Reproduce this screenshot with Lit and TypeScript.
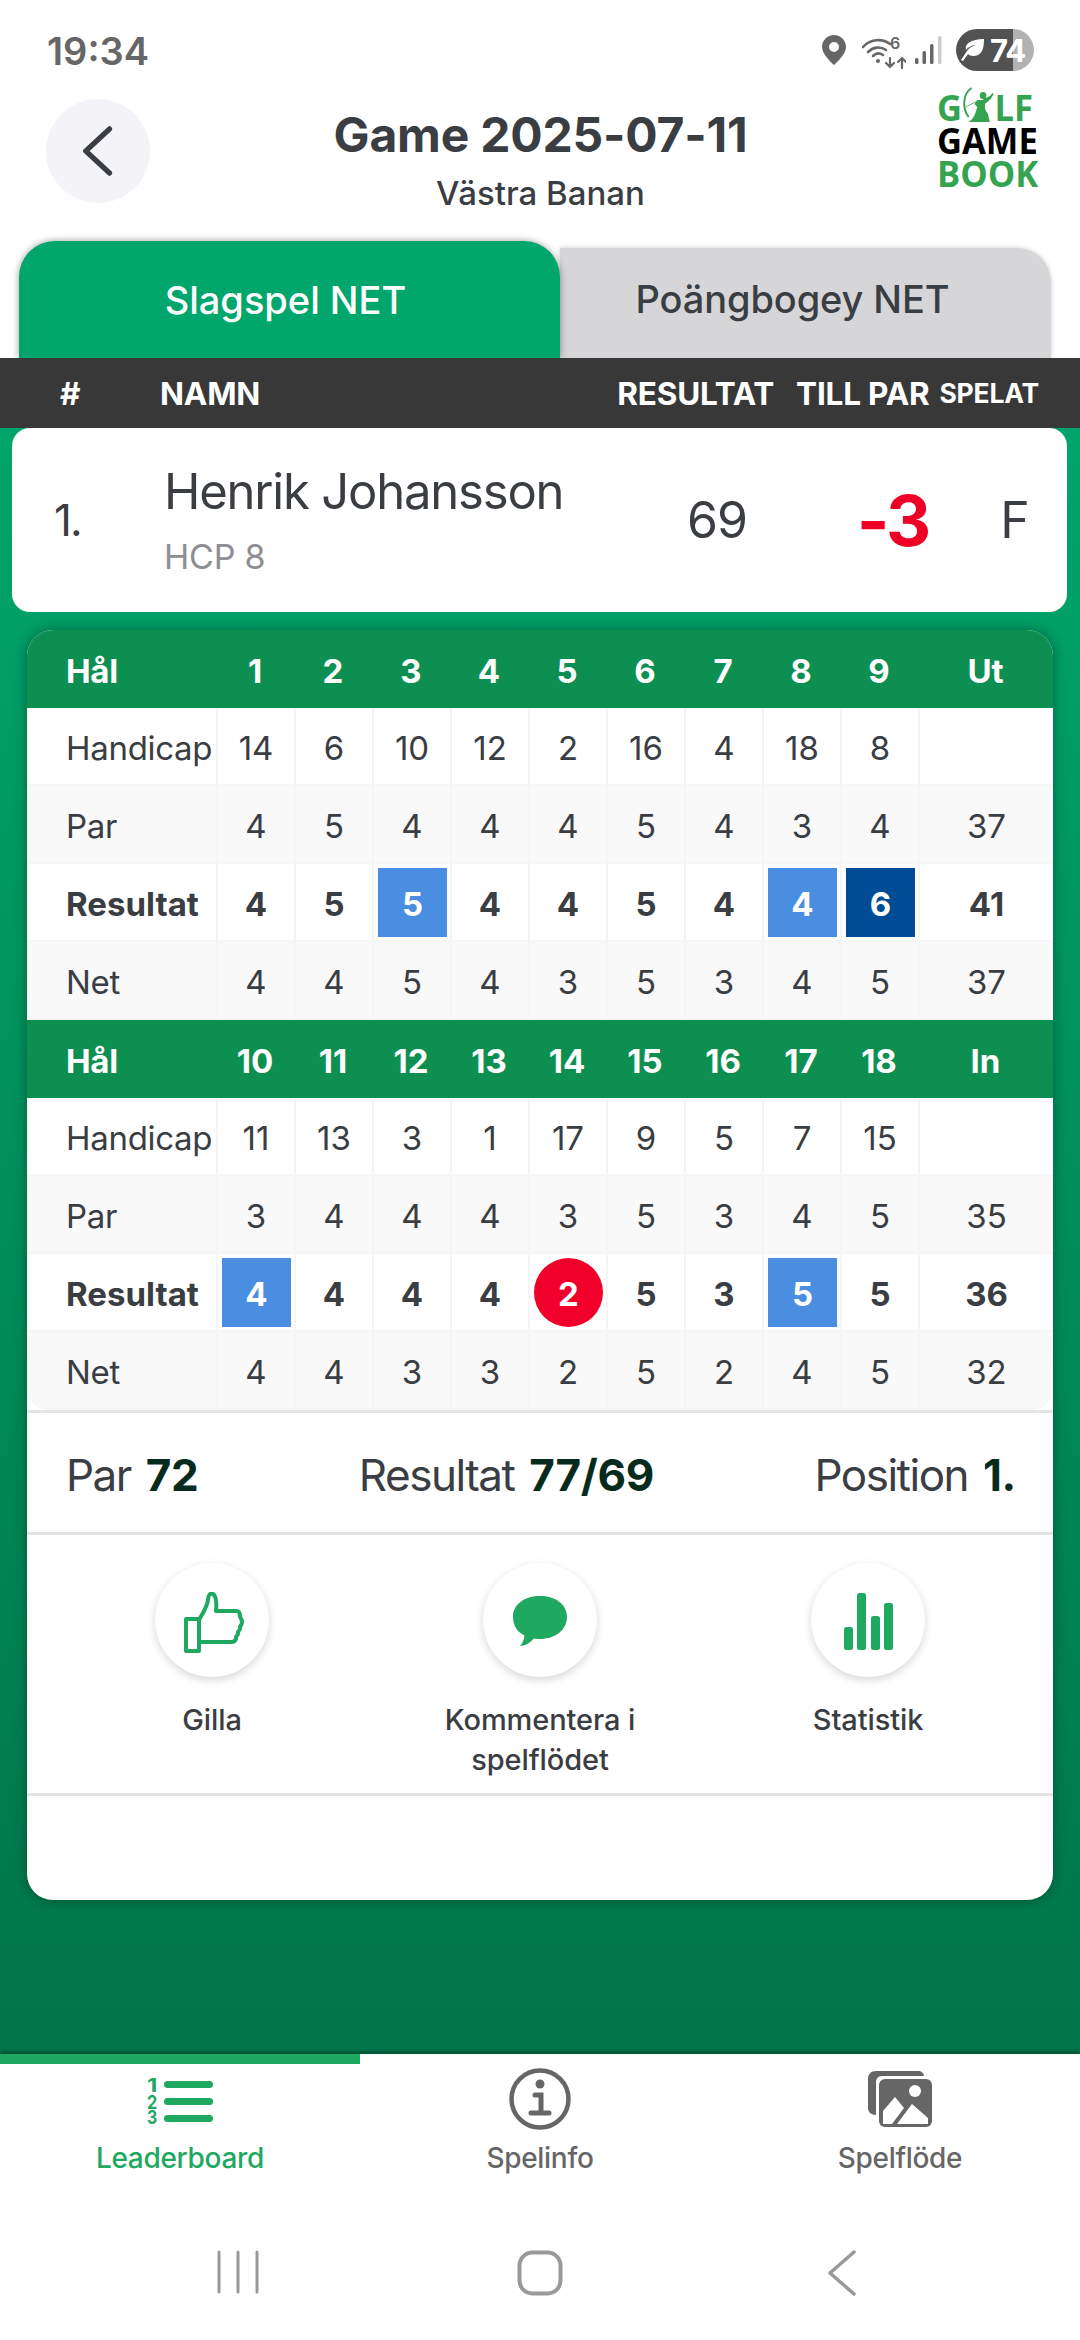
import { LitElement, html, css } from "lit";
import { customElement } from "lit/decorators.js";

type Mark = "" | "blue" | "dark" | "red";
interface Nine {
  head: string[]; label: string; hcp: string[]; par: string[]; res: string[]; net: string[]; marks: Record<number, Mark>;
}
const nines: Nine[] = [
  {
    head: ["1","2","3","4","5","6","7","8","9"], label: "Ut",
    hcp: ["14","6","10","12","2","16","4","18","8",""],
    par: ["4","5","4","4","4","5","4","3","4","37"],
    res: ["4","5","5","4","4","5","4","4","6","41"],
    net: ["4","4","5","4","3","5","3","4","5","37"],
    marks: { 2: "blue", 7: "blue", 8: "dark" },
  },
  {
    head: ["10","11","12","13","14","15","16","17","18"], label: "In",
    hcp: ["11","13","3","1","17","9","5","7","15",""],
    par: ["3","4","4","4","3","5","3","4","5","35"],
    res: ["4","4","4","4","2","5","3","5","5","36"],
    net: ["4","4","3","3","2","5","2","4","5","32"],
    marks: { 0: "blue", 4: "red", 7: "blue" },
  },
];

@customElement("app-root")
export class AppRoot extends LitElement {
  static styles = css`
    :host { display: flex; flex-direction: column; width: 1080px; height: 2340px; overflow: hidden; background: #fff;
      font-family: Inter, "Liberation Sans", sans-serif; color: #3a3d42; }
    svg { display: block; }

    .status { height: 90px; flex: none; display: flex; align-items: center; padding: 10px 46px 0 47px; box-sizing: border-box; }
    .time { font-size: 38px; font-weight: 600; color: #666; flex: 1; padding-top: 2px; }
    .status svg.pin { margin-right: 16px; }
    .status svg.wifi { margin-right: 9px; }
    .status svg.sig { margin-right: 14px; }
    .batt { width: 78px; height: 42px; border-radius: 21px; overflow: hidden; background: linear-gradient(90deg, #525252 0 57px, #b2b2b2 57px); display: flex; align-items: center; color: #fff; font-size: 31px; font-weight: 700; padding-left: 5px; box-sizing: border-box; letter-spacing: -1px; }
    .batt svg { margin-right: 6px; }

    .header { height: 151px; flex: none; display: grid; grid-template-columns: 1fr auto 1fr; padding: 0 45px 0 46px; box-sizing: border-box; }
    .back { width: 104px; height: 104px; border-radius: 50%; background: #f4f4f8; margin-top: 9px; display: flex; align-items: center; justify-content: center; padding-right: 5px; box-sizing: border-box; }
    .titles { text-align: center; margin-top: 16px; }
    .title { font-size: 48px; font-weight: 700; line-height: 58px; color: #3a3d42; letter-spacing: -0.2px; }
    .sub { font-size: 33px; font-weight: 500; line-height: 44px; margin-top: 7px; }
    .logo { justify-self: end; width: 100px; font-family: "Open Sans", sans-serif; font-weight: 700; font-size: 36px; line-height: 33px; color: #35a350; text-align: center; margin-top: 1px; transform: scaleX(.96); transform-origin: center; }
    .logo .l1 { display: flex; justify-content: space-between; align-items: center; height: 33px; }
    .logo .blk { color: #000; }

    .tabs { height: 117px; flex: none; display: flex; padding-left: 19px; align-items: flex-end; }
    .tab { display: flex; align-items: center; justify-content: center; font-size: 38px; font-weight: 500; box-sizing: border-box; }
    .tab.on { width: 541px; height: 117px; background: #00a66b; color: #fff; border-radius: 36px 36px 0 0; padding-right: 8px; box-shadow: 0 0 7px rgba(0,0,0,.4); position: relative; z-index: 1; }
    .tab.off { width: 491px; height: 110px; background: #d6d6d8; color: #3a3d42; border-radius: 0 34px 0 0; padding: 0 26px 8px 0; box-shadow: 0 0 5px rgba(0,0,0,.2); letter-spacing: -0.1px; }

    .bar { height: 70px; flex: none; background: #383838; color: #fff; display: flex; align-items: center; font-size: 31.5px; font-weight: 700; padding-left: 60px; position: relative; z-index: 2; letter-spacing: -0.2px; }
    .bar .hash { width: 100px; }
    .bar .nm { flex: 1; }
    .bar .r { margin-right: 22px; }
    .bar .t { margin-right: 10px; }
    .bar .s { font-size: 26.5px; margin-right: 41px; }

    .main { height: 1626px; flex: none; background: linear-gradient(180deg, #00a56b 0%, #00794c 92%, #007449 100%); box-sizing: border-box; }
    .player { height: 184px; margin: 0 13px 0 12px; background: #fff; border-radius: 18px; display: grid; grid-template-columns: 110px 1fr 163px 125px 112px; align-items: center; padding-left: 42px; box-sizing: border-box; }
    .rank { font-size: 44px; letter-spacing: -2px; }
    .pname { font-size: 49px; line-height: 60px; letter-spacing: -1.2px; margin-bottom: 13px; }
    .hcp { font-size: 34px; line-height: 44px; color: #8e8e93; letter-spacing: -0.2px; }
    .num { font-size: 50px; text-align: center; letter-spacing: -1px; }
    .res { margin-right: 63px; width: 100px; }
    .fin { padding-left: 7px; }
    .top { font-size: 70px; font-weight: 700; color: #ee0026; text-align: center; letter-spacing: -3px; }

    .card { margin: 18px 27px 0; height: 1270px; background: #fff; border-radius: 26px; box-shadow: 0 0 14px rgba(0,0,0,.35); overflow: hidden; display: flex; flex-direction: column; }
    .table { display: grid; grid-template-columns: 189px repeat(9, 78px) 1fr; font-size: 33px; flex: none; border-bottom: 3px solid #e4e4e6; height: 780px; grid-auto-rows: 78px; }
    .c { display: flex; align-items: center; justify-content: center; border-left: 2px solid #f5f5f6; border-bottom: 2px solid #f6f6f7; box-sizing: border-box; position: relative; padding-top: 4px; }
    .lab { justify-content: flex-start; padding-left: 39px; border-left: none; white-space: nowrap; letter-spacing: -0.3px; }
    .lab.b { letter-spacing: 0; }
    .h { background: #0e8f52; color: #fff; font-weight: 700; border: none; }
    .alt { background: #f9f9fa; }
    .b { font-weight: 700; }
    .table > .c:last-child { border-bottom-right-radius: 22px; }
    .table > .c:nth-last-child(11) { border-bottom-left-radius: 22px; }
    .mk { position: absolute; left: 4px; top: 4px; width: 69px; height: 69px; display: flex; align-items: center; justify-content: center; color: #fff; padding-top: 2px; box-sizing: border-box; }
    .mk.blue { background: #4a8ee2; }
    .mk.dark { background: #014c94; }
    .mk.red { background: #f0002b; border-radius: 50%; }

    .sum { height: 122px; flex: none; display: flex; align-items: center; justify-content: space-between; padding: 4px 37px 0 39px; font-size: 44px; border-bottom: 3px solid #e4e4e6; letter-spacing: -1.5px; box-sizing: border-box; }
    .sum b { color: #062b1c; font-weight: 700; margin-left: 4px; letter-spacing: -0.3px; }

    .acts { height: 261px; flex: none; display: grid; grid-template-columns: repeat(3, 328px); padding: 28px 0 0 21px; box-sizing: border-box; border-bottom: 3px solid #e4e4e6; }
    .act { display: flex; flex-direction: column; align-items: center; font-size: 29px; font-weight: 500; line-height: 40px; text-align: center; letter-spacing: -0.1px; }
    .circ { width: 114px; height: 114px; border-radius: 50%; background: #fff; box-shadow: 0 3px 9px rgba(0,0,0,.16); display: flex; align-items: center; justify-content: center; margin-bottom: 23px; }
    .thumb { margin: 4px 0 0 4px; }

    .nav { flex: 1; position: relative; z-index: 1; background: #fff; box-shadow: 0 -2px 4px rgba(0,0,0,.35); display: flex; flex-direction: column; }
    .ind { width: 360px; height: 10px; background: #1fa85f; flex: none; }
    .items { display: grid; grid-template-columns: repeat(3, 360px); height: 115px; flex: none; }
    .it { display: flex; flex-direction: column; align-items: center; font-size: 28px; font-weight: 500; color: #666; letter-spacing: -0.3px; }
    .it .ic { height: 70px; display: flex; align-items: center; }
    .it span { margin-top: 6px; line-height: 36px; }
    .it.on { color: #1fa85f; }
    .sys { display: flex; justify-content: center; padding-top: 71px; }
    .sys div { width: 302px; display: flex; justify-content: center; }
  `;

  private row(label: string, vals: string[], opts: { alt?: boolean; bold?: boolean; marks?: Record<number, Mark> } = {}) {
    const base = `c${opts.alt ? " alt" : ""}${opts.bold ? " b" : ""}`;
    return html`
      <div class="${base} lab">${label}</div>
      ${vals.map((v, i) => {
        const m = opts.marks?.[i];
        return html`<div class="${base}">${m ? html`<div class="mk ${m}">${v}</div>` : v}</div>`;
      })}`;
  }

  private nine(n: Nine) {
    return html`
      <div class="c h lab">Hål</div>
      ${n.head.map((h) => html`<div class="c h">${h}</div>`)}
      <div class="c h">${n.label}</div>
      ${this.row("Handicap", n.hcp)}
      ${this.row("Par", n.par, { alt: true })}
      ${this.row("Resultat", n.res, { bold: true, marks: n.marks })}
      ${this.row("Net", n.net, { alt: true })}`;
  }

  render() {
    return html`
      <div class="status">
        <div class="time">19:34</div>
        <svg class="pin" width="24" height="30" viewBox="0 0 24 30"><path fill="#666" fill-rule="evenodd" d="M12 0C5.4 0 0 5.2 0 11.8 0 19.5 9 27 12 30c3-3 12-10.500 12-18.200C24 5.200 18.600 0 12 0zm0 7a5 5 0 1 1 0 10 5 5 0 0 1 0-10z"/></svg>
        <svg class="wifi" width="44" height="37" viewBox="0 -4 44 37" fill="none" stroke="#666" stroke-width="2.600" stroke-linecap="round">
          <path d="M1 11C8 3 20 2 28 8"/><path d="M6 16c5-5 12-6 18-2"/><path d="M11 20c3-3 7-3 10-1"/>
          <circle cx="16" cy="25" r="2" fill="#666" stroke="none"/>
          <path d="M28 22v9M24 27l4 4 4-4M40 32v-9M36 26l4-4 4 4" stroke-width="2.200"/>
          <text x="28" y="13" font-size="16" font-weight="600" fill="#666" stroke="none" font-family="Inter, sans-serif">6</text>
        </svg>
        <svg class="sig" width="27" height="29" viewBox="0 0 27 29"><rect x="0" y="22" width="3.500" height="6" rx="1.500" fill="#666"/><rect x="7.500" y="15" width="3.500" height="13" rx="1.500" fill="#666"/><rect x="15" y="8" width="3.500" height="20" rx="1.500" fill="#666"/><rect x="23" y="0" width="3.500" height="28" rx="1.500" fill="#ccc"/></svg>
        <div class="batt">
          <svg width="23" height="24" viewBox="0 0 23 24"><path fill="#fff" d="M23 1c0 10-2 17-11 17-2 0-4-1-5-2l-5 7-2-1 6-9c2-3 5-5 9-6-4 0-8 2-10 5C3 6 10 1 23 1z"/></svg>
          <span>74</span>
        </div>
      </div>

      <div class="header">
        <div>
          <div class="back">
            <svg width="34" height="50" viewBox="0 0 34 50" fill="none" stroke="#3a3d42" stroke-width="5.500" stroke-linecap="round" stroke-linejoin="round"><path d="M30 3L5 25l25 22" transform="translate(2 0) scale(.95 1)"/></svg>
          </div>
        </div>
        <div class="titles">
          <div class="title">Game 2025-07-11</div>
          <div class="sub">Västra Banan</div>
        </div>
        <div class="logo">
          <div class="l1"><span>G</span>
            <svg width="38" height="36" viewBox="0 0 38 36" style="margin:-6px -3px 0 -3px"><path fill="none" stroke="#35a350" stroke-width="2" d="M12 1C4 6 1 20 9 30"/><path fill="#35a350" d="M24 5a3.500 3.500 0 1 1 0 7 3.500 3.500 0 0 1 0-7zM18 13l5 0 8-4 3-3 1 1-3 5-6 5 0 5 3 5 2 8H9c3-2 5-4 7-9l2-6-3-3z"/><path stroke="#35a350" stroke-width=".8" d="M18 14L6 20"/></svg>
            <span>LF</span></div>
          <div class="blk">GAME</div>
          <div>BOOK</div>
        </div>
      </div>

      <div class="tabs">
        <div class="tab on">Slagspel NET</div>
        <div class="tab off">Poängbogey NET</div>
      </div>

      <div class="bar">
        <div class="hash">#</div>
        <div class="nm">NAMN</div>
        <div class="r">RESULTAT</div>
        <div class="t">TILL PAR</div>
        <div class="s">SPELAT</div>
      </div>

      <div class="main">
        <div class="player">
          <div class="rank">1.</div>
          <div>
            <div class="pname">Henrik Johansson</div>
            <div class="hcp">HCP 8</div>
          </div>
          <div class="num res">69</div>
          <div class="top">-3</div>
          <div class="num fin">F</div>
        </div>

        <div class="card">
          <div class="table">${nines.map((n) => this.nine(n))}</div>
          <div class="sum">
            <div>Par <b>72</b></div>
            <div>Resultat <b>77/69</b></div>
            <div>Position <b>1.</b></div>
          </div>
          <div class="acts">
            <div class="act">
              <div class="circ">
                <svg class="thumb" width="60" height="61" viewBox="0 0 60 61" fill="none" stroke="#1fa85f" stroke-width="4" stroke-linejoin="round">
                  <rect x="2" y="27" width="13" height="32"/>
                  <path d="M15 28c4-7 8-13 9-20 0-5 2-7 5-6 3 2 4 7 3 17h20c3 0 4 2 4 5 0 2 2 3 2 6 0 3-2 4-2 5 1 3-2 4-2 5 1 3-2 4-2 5 1 3-2 5-5 5H15"/>
                </svg>
              </div>
              <div>Gilla</div>
            </div>
            <div class="act">
              <div class="circ">
                <svg width="54" height="50" viewBox="0 0 54 50" style="margin-top:2px"><path fill="#1fa85f" d="M27 0c15 0 27 8 27 21S42 43 27 43c-2 0-4 0-6-.5C17 47 12 50 7 50c2-2 4-6 4.500-10.500C4 36 0 29 0 21 0 8 12 0 27 0z"/></svg>
              </div>
              <div>Kommentera i<br />spelflödet</div>
            </div>
            <div class="act">
              <div class="circ">
                <svg width="49" height="57" viewBox="0 0 49 57" fill="#1fa85f" style="margin-top:2px">
                  <rect x="0" y="34" width="9" height="23" rx="2.500"/><rect x="13" y="0" width="9" height="57" rx="2.500"/><rect x="27" y="23" width="9" height="34" rx="2.500"/><rect x="40" y="10" width="9" height="47" rx="2.500"/>
                </svg>
              </div>
              <div>Statistik</div>
            </div>
          </div>
        </div>
      </div>

      <div class="nav">
        <div class="ind"></div>
        <div class="items">
          <div class="it on">
            <div class="ic">
              <svg width="66" height="58" viewBox="0 -7 66 58">
                <rect x="17" y="4" width="49" height="7" rx="3.500" fill="#1fa85f"/><rect x="17" y="21" width="49" height="7" rx="3.500" fill="#1fa85f"/><rect x="17" y="38" width="49" height="7" rx="3.500" fill="#1fa85f"/>
                <text x="0" y="15" font-size="19" font-weight="700" fill="#1fa85f" font-family="Inter, sans-serif" textLength="10" lengthAdjust="spacingAndGlyphs">1</text>
                <text x="0" y="32" font-size="19" font-weight="700" fill="#1fa85f" font-family="Inter, sans-serif" textLength="10" lengthAdjust="spacingAndGlyphs">2</text>
                <text x="0" y="47" font-size="19" font-weight="700" fill="#1fa85f" font-family="Inter, sans-serif" textLength="10" lengthAdjust="spacingAndGlyphs">3</text>
              </svg>
            </div>
            <span>Leaderboard</span>
          </div>
          <div class="it">
            <div class="ic">
              <svg width="62" height="62" viewBox="0 0 62 62" fill="none">
                <circle cx="31" cy="31" r="28.500" stroke="#666" stroke-width="4.500"/>
                <circle cx="31" cy="16" r="4.500" fill="#666"/>
                <path d="M26 27h6v17M22 45h18" stroke="#666" stroke-width="5" stroke-linecap="round"/>
              </svg>
            </div>
            <span>Spelinfo</span>
          </div>
          <div class="it">
            <div class="ic">
              <svg width="64" height="56" viewBox="0 0 64 56">
                <path fill="#666" d="M8 0h42c3 0 6 2 6 5H14c-4 0-6 3-6 6v33c-5 0-8-3-8-7V8c0-5 3-8 8-8z"/>
                <rect x="11" y="8" width="53" height="48" rx="6" fill="#666"/>
                <circle cx="47" cy="20" r="6" fill="#fff"/>
                <path fill="#fff" d="M15 53V40l12-14 9 11-12 16zM29 53l15-20 16 14v6z"/>
              </svg>
            </div>
            <span>Spelflöde</span>
          </div>
        </div>
        <div class="sys">
          <div>
            <svg width="42" height="44" viewBox="0 0 42 44" fill="none" stroke="#999" stroke-width="3" stroke-linecap="round"><path d="M2 2v40M21 2v40M40 2v40"/></svg>
          </div>
          <div>
            <svg width="46" height="46" viewBox="0 0 46 46" fill="none"><rect x="2.500" y="2.500" width="41" height="41" rx="13" stroke="#999" stroke-width="4"/></svg>
          </div>
          <div>
            <svg width="28" height="46" viewBox="0 0 28 46" fill="none" stroke="#999" stroke-width="3.500" stroke-linecap="round" stroke-linejoin="round"><path d="M26 2L2 23l24 21"/></svg>
          </div>
        </div>
      </div>
    `;
  }
}
